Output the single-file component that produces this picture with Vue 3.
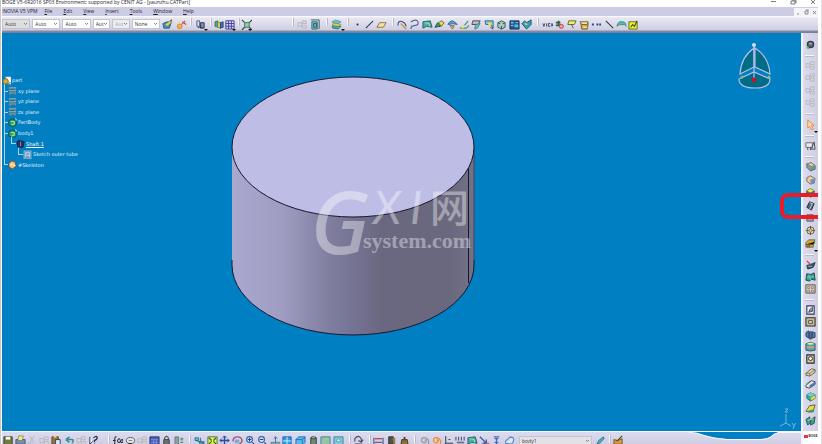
<script setup>
const icons = {
  paint: '<path d="M1 5l5-2 4 1-2 6-6 0z" fill="#3a9bd0" stroke="#28568c"/><path d="M3 6l6-4 2 1-5 5z" fill="#e8d44c" stroke="#5c6a38" stroke-width=".6"/><path d="M9 2l2-1" stroke="#222"/>',
  wand: '<circle cx="4" cy="8" r="2.6" fill="#f4b52c" stroke="#c8642a" stroke-width=".7"/><path d="M6 6l4-4M7 3l4 3" stroke="#b8502e" stroke-width="1.1"/><path d="M3 3h2" stroke="#f2e24a"/>',
  clips: '<path d="M2 2h3v6H2z" fill="#ccd6ea" stroke="#59658c"/><path d="M6 4h4v6H6z" fill="#7f8cab" stroke="#2d3758"/><path d="M3 9h5" stroke="#28324e"/>',
  books: '<path d="M1 3l3-1v7l-3-1z" fill="#44a896" stroke="#245e63" stroke-width=".7"/><path d="M4 3l3 1v6l-3-1z" fill="#f0dc4a" stroke="#5b7235" stroke-width=".7"/><path d="M7 4l3-1v6l-3 1z" fill="#3c72c0" stroke="#1a315e" stroke-width=".8"/>',
  grid: '<path d="M2 2h9M2 5h9M2 8h9M2 11h9M2 2v9M5 2v9M8 2v9M11 2v9" stroke="#4743a4" stroke-width="1.1"/>',
  snap: '<path d="M4 4h5v5H4z" fill="#9bcbae" stroke="#397657"/><path d="M1 1l3 3M12 1L9 4M1 12l3-3M12 12L9 9" stroke="#284d3c" stroke-width="1.2"/>',
  ghost: '<path d="M1 4h4v4H1zM6 2h4v3H6zM6 7h4v3H6z" fill="#d7d7de" stroke="#aaaab4" stroke-width=".7"/>',
  frame: '<path d="M2 3h6v8H2z" fill="#6fbbc2" stroke="#28787f"/><path d="M1 1h9v10M4 5h3v4H4z" fill="none" stroke="#2f5560"/>',
  layers: '<path d="M1 8l4-2 6 2-3 3-6-1z" fill="#3ea6ae" stroke="#255c6c" stroke-width=".7"/><path d="M1 6l4-2 6 2-3 2-6-1z" fill="#e8c651" stroke="#8d742c" stroke-width=".6"/><path d="M1 3l4-2 6 2-3 2-6-1z" fill="#65c9cd" stroke="#35787e" stroke-width=".6"/>',
  point: '<path d="M5 5h2v2H5z" fill="#222e5c"/>',
  line: '<path d="M2 10l8-8" stroke="#283361" stroke-width="1.1"/>',
  plane: '<path d="M1 9l3-5h7L8 9z" fill="#f7e2a4" stroke="#80672f" stroke-width=".9"/>',
  curve: '<path d="M1 7Q1 1 6 3q3 1 4 5" fill="none" stroke="#3c4877" stroke-width="1.1"/><path d="M4 5l6 6" stroke="#bd9743" stroke-width="1.5"/>',
  hook: '<path d="M2 3q8-4 8 1 0 3-4 3-4 1-4 4" fill="none" stroke="#41517f" stroke-width="1.1"/><circle cx="3" cy="8" r="1.1" fill="#5996c3"/>',
  surf: '<path d="M1 3l8-1 2 7-6-1-4 2z" fill="#40b3ad" stroke="#1d4f74" stroke-width=".9"/><path d="M3 4l5 1v3" fill="none" stroke="#bfe24e"/>',
  sweep: '<path d="M1 9l3-5 3 4z" fill="#38a45d" stroke="#1e4b52"/><path d="M5 4l3-2 3 2-3 4z" fill="#f1dd46" stroke="#464c2d" stroke-width=".8"/>',
  dome: '<path d="M1 6q4-8 10 0l-4-1z" fill="#58add0" stroke="#356182"/><path d="M3 7h5l-2 4z" fill="#e79c54" stroke="#5b5770" stroke-width=".7"/>',
  extract: '<path d="M1 10h7l3-3M6 7l4-5" fill="none" stroke="#4d9577" stroke-width="1.3"/><path d="M2 7l4 1-2 3z" fill="#f1e553"/>',
  trim: '<path d="M2 2h8L8 6H1z" fill="#d3b99a" stroke="#3b4a7b"/><path d="M5 6l5-1-3 5-3 1z" fill="#56c8c8" stroke="#2c6780" stroke-width=".7"/>',
  trim2: '<path d="M1 2h9v8L7 6H2z" fill="#80c8ca" stroke="#336881"/><path d="M4 4h5L6 9z" fill="#eadf63"/><path d="M7 9l3 2" stroke="#2b356b"/>',
  cube: '<path d="M2 4l4-2 4 2v5l-4 2-4-2z" fill="#9cc9cf" stroke="#285a72"/><path d="M2 4l4 2 4-2M6 6v5" fill="none" stroke="#285a72"/><circle cx="6" cy="6" r="1.6" fill="#e5ca59"/>',
  tiles: '<path d="M1 2h10v9H1z" fill="#225798" stroke="#1f315c"/><path d="M2 3h3v2H2zM6 6h4v3H6z" fill="#53c5d5"/><path d="M2 7h3M7 4h3" stroke="#8ad8de"/>',
  swirl: '<path d="M1 5l3-3 2 2 5-3v5l-5 5z" fill="#2aa2ba" stroke="#1d526e"/><path d="M4 5l3 1" stroke="#f2ce50" stroke-width="1.5"/>',
  strip: '<path d="M1 5h10M1 8h10" stroke="#b9bed1" stroke-width=".6"/><path d="M1 5l1 3 1-3M5 5v3M9 5H7v3h2" fill="none" stroke="#333747" stroke-width=".9"/><path d="M10 5h2v3h-2z" fill="#2b67a0"/>',
  plug: '<path d="M2 7h6M5 2v6M2 4h5" stroke="#2f614a" stroke-width="2"/><circle cx="8" cy="8" r="2.2" fill="#f1a0a6" stroke="#c63844"/>',
  callout: '<path d="M3 2h8L9 6H2z" fill="#f4ec67" stroke="#5a662f"/><path d="M6 6l2 4" stroke="#4b5631"/>',
  bucket: '<path d="M2 5h8l-1 6H3z" fill="#dca94c" stroke="#72552e"/><path d="M1 3h9l-1 3H3z" fill="#f4e491" stroke="#735f34"/><path d="M4 9h5" stroke="#fff2ba"/>',
  dots: '<path d="M1 5h2v2H1zM6 5h2v2H6zM9 5h2v2H9z" fill="#294782"/>',
  slash: '<path d="M2 2l8 8" stroke="#333855" stroke-width="1.2"/>',
  arch: '<path d="M1 8q1-6 6-5 4 0 4 5l-2-2H4z" fill="#4bc0bd" stroke="#297f8f" stroke-width=".8"/><path d="M4 7h5" stroke="#e4c75c"/>',
  note: '<path d="M1 3h9v8H1z" fill="#f2ee24" stroke="#5e6830"/><path d="M3 9l2-3 2 2 3-6" fill="none" stroke="#2d542d" stroke-width="1.2"/>',
  gear: '<circle cx="6" cy="6" r="3.5" fill="#59616c" stroke="#2b3740" stroke-width="1.2"/><path d="M2 8l2 3" stroke="#5fbb79" stroke-width="2"/><circle cx="6" cy="5" r="1.3" fill="#a4afb8"/>',
  cursor: '<path d="M3 1l7 6H7l2 4-2 1-2-4-2 2z" fill="#fbd7b0" stroke="#e78a40"/>',
  sketch: '<path d="M1 3h7v5H1z" fill="#ececec" stroke="#666"/><path d="M7 10l3-8 1 8zM3 8v3M6 8v3" fill="none" stroke="#4e4e55"/>',
  pad: '<path d="M2 3l5-1 4 3v4l-5 2-4-4z" fill="#839baa" stroke="#444d55" stroke-width=".8"/><path d="M2 3l5-1 4 3-4 1z" fill="#e6c89b" stroke="#6f6c50" stroke-width=".6"/><path d="M6 7l4 0-3 3z" fill="#3aa872"/>',
  padgold: '<path d="M2 4l4-2 5 3-1 5-4 1-4-3z" fill="#f4c888" stroke="#5f6e83"/><path d="M6 6l5-1-1 5-4 1z" fill="#6896bc"/>',
  solid: '<path d="M2 4l4-2 4 2v5l-4 2-4-2z" fill="#2b9557" stroke="#244c34"/><path d="M2 4l4-2 4 2-4 2z" fill="#f4e73e"/><path d="M6 6l4-2v5l-4 2z" fill="#3c75a4"/>',
  shaft: '<path d="M2 8l3-6 5 2-3 7z" fill="#526377" stroke="#202733"/><path d="M5 3l3 1-3 6" fill="none" stroke="#adc2d2" stroke-width="1.2"/>',
  block: '<path d="M2 3h7v7H2z" fill="#9a9ca9" stroke="#565667"/><path d="M4 6h4" stroke="#fff"/>',
  target: '<circle cx="6" cy="6" r="4" fill="#ded09b" stroke="#675e4b"/><path d="M6 1v10M1 6h10" stroke="#605646"/><circle cx="6" cy="6" r="1.5" fill="#f8e99d" stroke="#777"/>',
  bricks: '<path d="M1 5l3-3h7L9 5v5H1z" fill="#e6a632" stroke="#395b31" stroke-width=".8"/><path d="M1 7h8l2-3M5 5v5" stroke="#356b3d"/><path d="M2 9h3" stroke="#d73e2a" stroke-width="2"/>',
  stylus: '<path d="M2 7l4-1 5-2-2 5-6 2z" fill="#385779" stroke="#22303f"/><path d="M3 8h5" stroke="#5cd0a1"/><path d="M2 2l4 4" stroke="#dd4139" stroke-width="1.4"/>',
  shell: '<path d="M2 3q5 2 8-1l1 8-4-1-2 2-4-1z" fill="#2da28d" stroke="#17424b"/><path d="M4 4l2 6M2 7l8-1" stroke="#9be1bd" stroke-width=".7"/>',
  pattern: '<path d="M1 2h10v9H1z" fill="#d8ccb6" stroke="#534f54"/><path d="M3 4h2v2H3zM7 4h2v2H7zM3 8h2v2H3zM7 8h2v2H7z" fill="#fff4be" stroke="#534f54" stroke-width=".6"/>',
  pocket: '<path d="M2 2h8v9H2z" fill="#f4f3ef" stroke="#333a67" stroke-width="1.2"/><path d="M8 3v5l-4 1 2-4" fill="#96a5bd" stroke="#343b58"/>',
  hole: '<path d="M1 2h10v9H1z" fill="#ccb979" stroke="#252d48" stroke-width="1.1"/><path d="M4 5h4v3H4z" fill="#f2e4a4" stroke="#49495a"/>',
  columns: '<path d="M1 4l3-2v8l-3-2zM5 3h2v8H5zM8 3l3 1v5l-3 1z" fill="#4a7cae" stroke="#1d2d4e" stroke-width=".8"/>',
  drum: '<path d="M1 3q5-3 10 0v7q-5 2-10 0z" fill="#4ba4b0" stroke="#355d70"/><path d="M2 6h8v2H2z" fill="#ef9c55"/><path d="M2 3q4-2 8 0-4 2-8 0" fill="#efe6ab"/>',
  cut: '<path d="M2 2h8v9H2z" fill="#d8c989" stroke="#252c43" stroke-width="1.2"/><circle cx="6" cy="6" r="2.2" fill="#f4f1e6" stroke="#30374e"/>',
  wedge: '<path d="M1 8l6-5 4 1v3l-6 4-4-1z" fill="#e5d59b" stroke="#3e4355" stroke-width=".8"/><path d="M1 8l4 0 6-4M5 8v3" fill="none" stroke="#625a43" stroke-width=".7"/>',
  wedgeblue: '<path d="M1 8l6-5 4 1v3l-6 4-4-1z" fill="#e7e6df" stroke="#2f3650" stroke-width=".9"/><path d="M5 8l6-4v3l-6 4z" fill="#4b78ad"/><path d="M1 7l5-4" stroke="#3aa07d"/>',
  gem: '<path d="M2 4l4-2 5 2v4l-5 3-4-3z" fill="#2aaf94" stroke="#28534b" stroke-width=".8"/><path d="M2 4l4 2 5-2-5-2z" fill="#6ed2d2"/><path d="M6 7l5-2v3l-4 2z" fill="#efd33e"/>',
  leaf: '<path d="M1 9l4-6 6-1-2 7-4 1z" fill="#f0d943" stroke="#4a633b"/><path d="M2 9l6-2 2 3H5z" fill="#309975"/>',
  twin: '<path d="M1 5l4-3 1 6-3 3zM6 5l5-3-1 7-4 2z" fill="#36a58f" stroke="#255463"/><path d="M3 6l6-2" stroke="#e7e173"/>',
  disk: '<path d="M1 2h9v9H1z" fill="#6f7b43" stroke="#333d2d"/><path d="M3 2h5v3H3z" fill="#fff"/>',
  printer: '<path d="M1 5h10v5H1z" fill="#7090b0" stroke="#495466"/><path d="M4 1h5L8 6H3z" fill="#eee78d" stroke="#75734e" stroke-width=".7"/>',
  scissors: '<path d="M3 1l5 8M8 1L3 9" stroke="#b5b6c2"/><circle cx="3" cy="10" r="1.5" fill="none" stroke="#b5b6c2"/>',
  paste: '<path d="M1 2h7v8H1z" fill="#9a713c" stroke="#554b2b"/><path d="M5 5h5v6H5z" fill="#d9edff" stroke="#2b3d67"/><path d="M3 1h3v2H3z" fill="#ecd45d"/>',
  undo: '<path d="M3 5h6q2 0 0 4M2 5l4-3M2 5l4 3" fill="none" stroke="#358e96" stroke-width="1.7"/>',
  help: '<path d="M2 2v8l3-3" fill="#fff" stroke="#243260"/><path d="M6 3q4-3 4 0 0 2-3 3v2M7 10h1" fill="none" stroke="#243260" stroke-width="1.5"/>',
  formula: '<path d="M1 6h3M5 2Q3 1 3 5v6M9 5q-2-2-3 1 1 4 3 1 3-4 3 0-2 3-3-1" fill="none" stroke="#26272e" stroke-width="1.1"/>',
  chat: '<ellipse cx="6" cy="6" rx="4.500" ry="3.300" fill="#e6e6e6" stroke="#575960"/><path d="M4 9v2l3-2" stroke="#444"/><path d="M4 6h4" stroke="#777"/>',
  table: '<path d="M1 2h10v9H1z" fill="#4d60b6" stroke="#27336d"/><path d="M2 5h8M2 8h8M5 5v5M8 5v5" stroke="#92a9df" stroke-width=".6"/>',
  lock: '<path d="M4 5V3q2-3 4 0v2" fill="none" stroke="#4c5353" stroke-width="1.2"/><path d="M3 5h6v6H3z" fill="#697170" stroke="#374241"/>',
  parts: '<path d="M1 2h4v9H1z" fill="#8e9ca7" stroke="#56656b" stroke-width=".7"/><path d="M7 3h3v3H7z" fill="#5ba674"/><path d="M7 8h3" stroke="#555"/>',
  tree: '<path d="M1 3h4v3H1zM6 7h5v3H6z" fill="#50bdd2" stroke="#296b83" stroke-width=".8"/><path d="M2 6l9 3M7 3v4" stroke="#2b6583"/>',
  fit: '<path d="M1 2h10v9H1z" fill="#f4ed55" stroke="#377a46"/><path d="M2 3l3 3M10 3L7 6M2 10l3-3M10 10L7 7" stroke="#27733f" stroke-width="1.4"/>',
  move: '<path d="M6 1v10M1 6h10" stroke="#29499a" stroke-width="1.5"/><path d="M4 3l2-2 2 2M3 4L1 6l2 2M9 4l2 2-2 2" fill="none" stroke="#29499a"/>',
  rotate: '<path d="M1 7q0-5 5-5 5 0 5 5l-3 3" fill="none" stroke="#9b5a78" stroke-width="1.5"/><path d="M3 5h5v4H3z" fill="#83a9d0"/>',
  zoomin: '<circle cx="5" cy="5" r="3.2" fill="#d3e5fa" stroke="#3763a9" stroke-width="1.2"/><path d="M3 5h4M5 3v4M8 8l3 3" stroke="#284679" stroke-width="1.1"/>',
  zoomout: '<circle cx="5" cy="5" r="3.2" fill="#d3e5fa" stroke="#3763a9" stroke-width="1.2"/><path d="M3 5h4M8 8l3 3" stroke="#284679" stroke-width="1.1"/>',
  normal: '<path d="M1 8h10l-2 3H2z" fill="#77aab8" stroke="#4d7189" stroke-width=".7"/><path d="M6 8V2M4 4l2-2 2 2" fill="none" stroke="#3e6888"/>',
  views: '<path d="M1 2h9v9H1z" fill="#299ddd" stroke="#2155be"/><path d="M5.500 2v9M1 6.500h9" stroke="#d6f2ff"/>',
  box: '<path d="M1 5l3-3h7v6l-3 3H1z" fill="#55bce7" stroke="#246cb7"/><path d="M1 5h7l3-3M8 5v6" fill="none" stroke="#246cb7"/>',
  can: '<path d="M3 3h6v8H3z" fill="#6d8a78" stroke="#263a37"/><path d="M4 2h4v2H4z" fill="#f0ebb7" stroke="#38413c"/>',
  photo: '<path d="M1 2h10v9H1z" fill="#8ac4b4" stroke="#4f8090"/><path d="M3 9l4-5 2 2" fill="none" stroke="#dcc853"/>',
  photoblue: '<path d="M1 2h10v9H1z" fill="#7cc8da" stroke="#3f82a6"/><path d="M3 7l3-3 3 3z" fill="#e9f6e0" stroke="#3f8292" stroke-width=".6"/>',
  redo: '<path d="M2 7V4q4-5 7 0v3M6 6l3 2 2-3M2 10h8" fill="none" stroke="#434968" stroke-width="1.2"/>',
  measure: '<path d="M1 3v7M11 3v7M2 8h8" stroke="#394076"/><path d="M2 4h8" stroke="#c24650" stroke-width="1.5"/>',
  person: '<path d="M3 2h5v8H3z" fill="#4f5357" stroke="#26292c"/><path d="M7 3h3v7H8z" fill="#96793e"/>',
  weight: '<path d="M3 5h6l1 6H2z" fill="#8c7330" stroke="#44371c"/><path d="M5 2h2v4H5z" fill="#4f4732"/>',
  spiral: '<path d="M6 6q2-2 2 1-2 3-5 0-1-5 4-4 5 2 3 7" fill="none" stroke="#949799" stroke-width="1.3"/>',
  orange: '<path d="M6 6q2-2 2 1-2 3-5 0-1-5 4-4 5 2 3 7" fill="#fbd2aa" stroke="#e48945" stroke-width="1.4"/>',
  axis: '<path d="M3 1v8h8M3 9l-2 2M6 5h2" fill="none" stroke="#2f4655" stroke-width="1.1"/>',
  digits: '<path d="M1 2v4M4 2v4M7 2v4M10 2v4M2 8h8M2 10h8" stroke="#444b6b" stroke-width="1.1"/>',
  arrow: '<path d="M1 2l7 7M8 5v4H4" fill="none" stroke="#4060a6" stroke-width="1.5"/><path d="M7 9h4" stroke="#c64854"/>',
  pin: '<path d="M3 2h6M4 4h4M6 4v7M4 8h4" stroke="#4868b2" stroke-width="1.2"/>',
  cloud: '<path d="M2 9q-1-3 2-4 2-4 6-2 2 3-2 7z" fill="#dbe6f7" stroke="#4e7dbd" stroke-width="1.1"/>',
  pen: '<path d="M2 10l2-4 5-4 1 2-5 5z" fill="#4cb2bf" stroke="#305b82" stroke-width=".8"/>',
  book: '<path d="M1 5l4 1 5-2v6H1z" fill="#e39a37" stroke="#76502a"/><path d="M4 7l6-6" stroke="#3f4637" stroke-width="1.3"/>',
}

const topGroups = [
  { span: 28, items: ['paint', 'wand'], plain: true },
  { span: 2 },
  { span: 20, items: ['clips'], more: true },
  { span: 28, items: ['books', 'grid'], more: true },
  { span: 16, items: ['snap'], more: true },
  { span: 38 },
  { span: 34, items: ['ghost', 'frame'] },
  { span: 21, items: ['layers'], more: true },
  { span: 45, items: ['point', 'line', 'plane'] },
  { span: 145, items: ['curve', 'hook', 'surf', 'sweep', 'dome', 'extract', 'trim', 'trim2', 'cube', 'tiles', 'swirl'] },
  { span: 107, items: ['strip', 'plug', 'callout', 'bucket', 'dots', 'slash', 'arch', 'note'] },
  { span: 174 },
]
const sideGroups = [
  { span: 22, items: ['gear'], plain: true },
  { span: 58, items: ['ghost', 'ghost', 'ghost', 'ghost'] },
  { span: 22, items: ['cursor'], more: true },
  { span: 21, items: ['sketch'] },
  { span: 98, items: ['pad', 'padgold', 'solid', 'shaft', 'block', 'target', 'bricks'], more: true },
  { span: 45, items: ['stylus', 'shell', 'pattern'] },
  { span: 132, items: ['pocket', 'hole', 'columns', 'drum', 'cut', 'wedge', 'wedgeblue', 'gem', 'leaf', 'twin'] },
]
const bottomGroups = [
  { span: 98, items: ['disk', 'printer', 'scissors', 'ghost', 'paste', 'undo', 'ghost', 'help'], plain: true },
  { span: 8 },
  { span: 82, items: ['formula', 'chat', 'ghost', 'table', 'lock', 'parts'] },
  { span: 160, items: ['tree', 'fit', 'move', 'rotate', 'zoomin', 'zoomout', 'normal', 'views', 'box', 'can', 'photo', 'photoblue'] },
  { span: 20, items: ['redo'] },
  { span: 46, items: ['measure', 'person', 'weight'] },
  { span: 105, items: ['spiral', 'orange', 'axis', 'digits', 'surf', 'arrow', 'pin', 'cloud'] },
  { span: 73, select: 'body1' },
  { span: 17, items: ['pen'], plain: true },
  { span: 20, items: ['book'] },
  { span: 173 },
]
const tracks = groups => groups.map(g => `minmax(0, ${g.span}fr)`).join(' ')

const menus = ['File', 'Edit', 'View', 'Insert', 'Tools', 'Window', 'Help']
const selects = [
  { label: 'Fill colour', value: 'Auto', kind: 'wide grey' },
  { label: 'Transparency', value: 'Auto', kind: 'wide' },
  { label: 'Line weight', value: 'Auto', kind: 'wide' },
  { label: 'Line type', value: 'Aut', kind: '' },
  { label: 'Point symbol', value: 'Aut', kind: 'off' },
  { label: 'Layer', value: 'None', kind: 'wide' },
]
const tree = [
  { text: 'part', icon: 'root', level: 0 },
  { text: 'xy plane', icon: 'plane', level: 1 },
  { text: 'yz plane', icon: 'plane', level: 1 },
  { text: 'zx plane', icon: 'plane', level: 1 },
  { text: 'PartBody', icon: 'body', level: 1 },
  { text: 'body1', icon: 'body', level: 1 },
  { text: 'Shaft.1', icon: 'shaft', level: 2, active: true },
  { text: 'Sketch outer tube', icon: 'sketch', level: 3 },
  { text: '#Skeleton', icon: 'skeleton', level: 1 },
]
const treeIcons = {
  root: '<path d="M4 1h6v8H6z" fill="#f8f8ef" stroke="#d1d8d0" stroke-width=".6"/><circle cx="4" cy="6" r="3" fill="#d9aa42" stroke="#6c642e"/><path d="M7 9l2-2" stroke="#222"/>',
  plane: '<path d="M1 1h8v9H1z" fill="#4186a5"/><path d="M1 2h8M1 5h8M2 8h7" stroke="#8eafb7"/><path d="M2 4h5M3 9h5" stroke="#386076"/>',
  body: '<path d="M1 3l4-2 4 2v5l-4 2-4-2z" fill="#20a16d" stroke="#144c4c"/><path d="M3 4h4v3H4" fill="none" stroke="#d6ef92"/><path d="M8 1h1v2" stroke="#fff"/>',
  shaft: '<path d="M1 3l3-2 1 7-3 1zM5 2l4 1-1 6-3 1z" fill="#272e6e" stroke="#18264d"/><path d="M5 3v5" stroke="#c58e5b"/>',
  sketch: '<path d="M1 1h8v9H1z" fill="#679bbf" stroke="#b1ccd8" stroke-width=".6"/><path d="M3 8V3h4v5M4 6h3" fill="none" stroke="#e3eef2" stroke-width=".8"/>',
  skeleton: '<path d="M1 4l3-3 4 1 1 5-4 3-4-2z" fill="#eec172" stroke="#6a4a46"/><path d="M3 5h2M6 6h2" stroke="#fff" stroke-width="1.4"/>',
}
</script>

<template>
  <div class="window">
    <header class="title">
      <span>BOGE V5-6R2016 SP03 Environment: supported by CENIT AG - [yaunzhu.CATPart]</span>
      <svg class="controls" viewBox="0 0 48 7" aria-hidden="true">
        <path d="M1 1.500h5M21 1h4v3h-4zM22 0h4v3M41 0l4 4M45 0l-4 4" fill="none" stroke="#555" stroke-width=".8" />
      </svg>
    </header>

    <nav class="menu">
      <a href="#" class="brand">:NOVIA V5 VPM</a>
      <a v-for="m in menus" :key="m" href="#"><u>{{ m[0] }}</u>{{ m.slice(1) }}</a>
      <svg class="controls child" viewBox="0 0 24 8" aria-hidden="true">
        <path d="M0 0h24v8H0z" fill="#f4f4f8" />
        <path d="M3 6h2M11 3h3v3h-3zM12 2h3M19 3l3 3M22 3l-3 3" fill="none" stroke="#667" stroke-width=".7" />
      </svg>
    </nav>

    <div class="toolbar">
      <div class="selects">
        <span v-for="s in selects" :key="s.label" class="pick" :class="s.kind">
          <select :aria-label="s.label" :disabled="s.kind === 'off'"><option>{{ s.value }}</option></select>
          <svg viewBox="0 0 5 4" aria-hidden="true"><path d="M1 1l1.500 1.500L4 1" fill="none" stroke="#666" stroke-width=".8" /></svg>
        </span>
      </div>
      <div class="groups" :style="{ gridTemplateColumns: tracks(topGroups) }">
        <div v-for="(g, i) in topGroups" :key="i" class="group" :class="{ sep: g.items && !g.plain, plain: g.plain, more: g.more }">
          <button v-for="(n, k) in g.items" :key="k" type="button" :aria-label="n">
            <svg viewBox="0 0 12 12" v-html="icons[n]"></svg>
          </button>
        </div>
      </div>
    </div>

    <main class="canvas">
      <svg class="scene" viewBox="0 0 799 398" preserveAspectRatio="xMidYMid meet">
        <defs>
          <linearGradient id="side">
            <stop offset="0" stop-color="#aaa8cf" />
            <stop offset=".2" stop-color="#9f9dc1" />
            <stop offset=".4" stop-color="#817fa0" />
            <stop offset=".52" stop-color="#737190" />
            <stop offset=".62" stop-color="#696880" />
            <stop offset=".9" stop-color="#69687e" />
            <stop offset="1" stop-color="#747288" />
          </linearGradient>
        </defs>
        <path d="M230 114v118a121 70 0 0 0 242 0V114z" fill="url(#side)" />
        <path d="M230 227v5a121 70 0 0 0 242 0v-5M466.500 135v115" fill="none" stroke="#17172a" />
        <path d="M472 114v113" stroke="#454456" />
        <ellipse cx="351" cy="114" rx="121" ry="70" fill="#bebde5" stroke="#17172a" />
        <g class="mark">
          <text x="309" y="220" class="big">G</text>
          <text x="371" y="191" class="mid">X</text>
          <text x="408" y="191" class="mid">I</text>
          <text x="428" y="189" class="cjk">网</text>
          <text x="361" y="215" class="site">system.com</text>
        </g>
        <g stroke="#b5bde9" stroke-width="1.200">
          <path d="M752 15q-13 9-14 26l14-7z" fill="#006c86" />
          <path d="M753 15q14 9 15 26l-15-7z" fill="#006c86" />
          <path d="M737 46l15-7 16 7q0 9-15 9-16 0-16-9z" fill="#006c86" />
          <path d="M752 14v32" fill="none" />
        </g>
        <circle cx="752" cy="12" r="2" fill="#d8dbee" />
        <circle cx="740" cy="44" r="1.500" fill="#83bd77" />
        <circle cx="767" cy="44" r="1.500" fill="#83bd77" />
        <circle cx="752" cy="47" r="2.400" fill="#c3152e" />
        <path d="M784 381v9l-6 3M784 390l5 3M783 376h3l-3 3h3M790 390l2 3 2-3M792 393l-1 3" fill="none" stroke="#8fc1e5" stroke-width=".8" />
      </svg>

      <ul class="tree">
        <li v-for="(t, i) in tree" :key="i" :class="['l' + t.level, { active: t.active }]">
          <svg viewBox="0 0 10 10" aria-hidden="true" v-html="treeIcons[t.icon]"></svg>
          <span>{{ t.text }}</span>
        </li>
      </ul>
    </main>

    <aside class="side">
      <div class="groups" :style="{ gridTemplateRows: tracks(sideGroups) }">
        <div v-for="(g, i) in sideGroups" :key="i" class="group" :class="{ sep: !g.plain, plain: g.plain, more: g.more }">
          <button v-for="(n, k) in g.items" :key="k" type="button" :aria-label="n">
            <svg viewBox="0 0 12 12" v-html="icons[n]"></svg>
          </button>
        </div>
      </div>
      <div class="badge"><i></i><b>BOGE</b></div>
      <div class="callout"></div>
    </aside>

    <footer class="bottom">
      <div class="groups" :style="{ gridTemplateColumns: tracks(bottomGroups) }">
        <div v-for="(g, i) in bottomGroups" :key="i" class="group" :class="{ sep: g.items && !g.plain, plain: g.plain || g.select }">
          <span v-if="g.select" class="pick body">
            <select aria-label="Active body"><option>{{ g.select }}</option></select>
            <svg viewBox="0 0 5 4" aria-hidden="true"><path d="M1 1l1.500 1.500L4 1" fill="none" stroke="#666" stroke-width=".8" /></svg>
          </span>
          <button v-for="(n, k) in g.items" :key="k" type="button" :aria-label="n">
            <svg viewBox="0 0 12 12" v-html="icons[n]"></svg>
          </button>
        </div>
      </div>
      <svg class="wave" viewBox="0 0 112 9" aria-hidden="true">
        <path d="M0 0h112v1H90q-5 1-9 5-3 2-10 2H38Q24 7 15 4 8 1 0 1z" fill="#007fc2" />
        <path d="M0 1.500q8 0 15 3 9 3 23 4h33q7 0 10-2 4-4 9-5h22" fill="none" stroke="#f7f8ff" />
      </svg>
    </footer>
  </div>
</template>

<style>
body {
  margin: 0;
  background: #fff;
}
</style>

<style scoped>
.window {
  display: grid;
  grid-template-columns: minmax(0, 1fr) 17px;
  grid-template-rows: 7px 9px 17px minmax(0, 1fr) 13px;
  height: 100vh;
  padding: 0 4px 0 2px;
  box-sizing: border-box;
  overflow: hidden;
  background: #fff;
  box-shadow: inset 1px 0 #c6c6cc, inset -1px 0 #e2e2e6;
  font-family: "Open Sans", "Liberation Sans", sans-serif;
  font-size: 5px;
  color: #22222c;
}
.title,
.menu,
.toolbar {
  grid-column: 1 / -1;
  display: flex;
  white-space: nowrap;
}
.title {
  line-height: 5px;
  overflow: hidden;
}
.controls {
  width: 48px;
  height: 7px;
  margin-left: auto;
}
.menu {
  align-items: center;
  gap: 11px;
  line-height: 9px;
  background: #cdcce5;
}
.menu a {
  color: inherit;
  text-decoration: none;
}
.menu .brand {
  margin-right: -4px;
}
.controls.child {
  width: 24px;
  height: 8px;
}
.toolbar {
  background: linear-gradient(#fff 0, #e7e6f2 2px, #dcdbeb 8px, #cfcee2 14px, #8d8ea3 15px, #6c7d9b 17px);
}
.selects {
  display: flex;
  gap: 2px;
  width: 158px;
  padding: 3px 0 4px;
  box-sizing: border-box;
}
.pick {
  position: relative;
  flex: 18 1 0;
  min-width: 0;
}
.pick.wide {
  flex-grow: 29;
}
.pick select {
  display: block;
  appearance: none;
  width: 100%;
  height: 100%;
  padding: 0 0 0 2px;
  border: 1px solid #c3c3d0;
  border-radius: 0;
  box-sizing: border-box;
  background: #fff;
  color: #333;
  font: 5px/8px "Open Sans", sans-serif;
}
.pick svg {
  position: absolute;
  right: 2px;
  top: 50%;
  width: 5px;
  height: 4px;
  margin-top: -2px;
}
.pick.grey select {
  background: #dededf;
}
.pick.off select {
  background: #ececf2;
  color: #aaa;
  opacity: 1;
}
.pick.body select {
  background: #e2e2e6;
}
.groups {
  display: grid;
  flex: 1;
  min-width: 0;
}
.group {
  position: relative;
  display: flex;
  align-items: center;
  padding: 0 4px;
}
.group.plain {
  padding: 0;
}
.group button {
  display: flex;
  flex: 1 1 0;
  justify-content: center;
  align-items: center;
  min-width: 0;
  min-height: 0;
  padding: 0;
  border: 0;
  background: none;
}
.group button svg {
  flex: none;
  width: 11px;
  height: 11px;
}
.group.sep::before {
  content: "";
  position: absolute;
  left: 0;
  top: 2px;
  width: 1px;
  height: 8px;
  background: #f6f6fc;
  border-right: 1px solid #b9b9cb;
}
.group.more::after {
  content: "";
  position: absolute;
  right: 2px;
  bottom: 2px;
  border: 2px solid transparent;
  border-top-color: #111;
  border-bottom: 0;
}
.canvas {
  position: relative;
  background: #007fc2;
  min-height: 0;
}
.scene {
  display: block;
  width: 100%;
  height: 100%;
}
.mark {
  fill: #fff;
  opacity: .38;
}
.big {
  font: italic 84px "Open Sans", sans-serif;
  stroke: #fff;
  stroke-width: 2px;
}
.mid {
  font: italic 46px "Lato", "Open Sans", sans-serif;
}
.cjk {
  font: 500 39px "Noto Sans CJK SC", sans-serif;
}
.site {
  font: bold 22px "Liberation Serif", serif;
}
.tree {
  position: absolute;
  left: 0;
  top: 42px;
  display: grid;
  grid-auto-rows: 1fr;
  height: 95px;
  margin: 0;
  padding: 0;
  list-style: none;
  color: #e2f1fa;
  font: 5px/10px "DejaVu Sans", sans-serif;
}
.tree::before {
  content: "";
  position: absolute;
  left: 2px;
  top: 8px;
  bottom: 5px;
  border-left: 1px solid #acd3ed;
}
.tree li {
  position: relative;
  display: flex;
  align-items: center;
  gap: 1px;
  min-height: 0;
  white-space: nowrap;
}
.tree svg {
  width: 9px;
  height: 9px;
}
.tree .l1 {
  padding-left: 6px;
}
.tree .l2 {
  padding-left: 14px;
}
.tree .l3 {
  padding-left: 21px;
}
.tree .l1::before,
.tree .l2::before,
.tree .l3::before {
  content: "";
  position: absolute;
  top: 5px;
  left: 2px;
  width: 4px;
  border-top: 1px solid #acd3ed;
}
.tree .l2::before,
.tree .l3::before {
  top: -1px;
  left: 9px;
  height: 6px;
  border-top: 0;
  border-left: 1px solid #acd3ed;
  border-bottom: 1px solid #acd3ed;
}
.tree .l3::before {
  left: 16px;
}
.tree .active {
  color: #fff;
  text-decoration: underline;
}
.side {
  position: relative;
  grid-row: 4 / 6;
  grid-column: 2;
  display: flex;
  flex-direction: column;
  border-left: 2px solid #f4f4fb;
  background: linear-gradient(90deg, #dddced, #cfcee3);
}
.side .groups {
  min-height: 0;
}
.side .group {
  flex-direction: column;
  padding: 4px 0;
}
.side .group.plain {
  padding: 0;
}
.side .group.sep::before {
  left: 2px;
  top: 0;
  width: 9px;
  height: 1px;
  border-right: 0;
  border-bottom: 1px solid #b9b9cb;
}
.side .group.more::after {
  right: 0;
}
.badge {
  display: flex;
  align-items: center;
  justify-content: center;
  gap: 1px;
  height: 11px;
  padding-bottom: 2px;
  background: #fff;
}
.badge i {
  flex: none;
  width: 4px;
  height: 3px;
  background: #e23a44;
}
.badge b {
  font: bold 3px/5px "Liberation Sans", sans-serif;
}
.callout {
  position: absolute;
  top: 160px;
  right: 0;
  width: 38px;
  height: 26px;
  box-sizing: border-box;
  border: 4px solid #ea1c26;
  border-right: 0;
  border-radius: 8px 0 0 8px;
}
.bottom {
  position: relative;
  display: flex;
  border-top: 1px solid #f7f8ff;
  background: linear-gradient(#dcdbee, #cfcee5);
  overflow: hidden;
}
.bottom .group {
  height: 17px;
}
.bottom .group.sep::before {
  top: 3px;
}
.bottom .pick.body {
  height: 10px;
}
.wave {
  position: absolute;
  right: 0;
  top: -1px;
  width: 112px;
  height: 9px;
}
</style>
